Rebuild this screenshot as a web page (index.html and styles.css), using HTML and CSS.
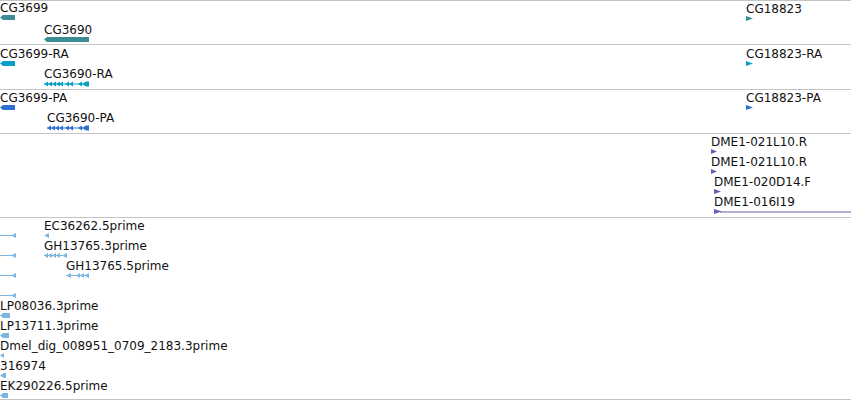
FILE: index.html
```html
<!DOCTYPE html>
<html>
<head>
<meta charset="utf-8">
<link rel="stylesheet" href="styles.css">
</head>
<body>
<div class="view">
  <section class="track gene teal">
    <div class="feat" style="left:0;top:1px"><span class="lbl">CG3699</span>
      <svg width="15" height="5"><polygon points="0,2.5 3,0 15,0 15,5 3,5"/></svg></div>
    <div class="feat" style="left:44px;top:23px"><span class="lbl">CG3690</span>
      <svg width="45" height="5"><polygon points="0,2.5 3,0 45,0 45,5 3,5"/></svg></div>
    <div class="feat" style="left:746px;top:2px"><span class="lbl">CG18823</span>
      <svg width="7" height="5"><polygon points="0,0 7,2.5 0,5"/></svg></div>
  </section>
  <section class="track gene cyan">
    <div class="feat" style="left:0;top:3px"><span class="lbl">CG3699-RA</span>
      <svg width="15" height="5"><polygon points="0,2.5 3,0 15,0 15,5 3,5"/></svg></div>
    <div class="feat" style="left:44px;top:23px"><span class="lbl">CG3690-RA</span>
      <svg width="45" height="6"><rect x="0" y="2.5" width="45" height="1"/><polygon points="0,3 4,0.5 4,5.5"/><polygon points="4,3 8,0.5 8,5.5"/><polygon points="8,3 12,0.5 12,5.5"/><polygon points="12,3 16,0.5 16,5.5"/><polygon points="15,3 19,0.5 19,5.5"/><polygon points="21,3 25,0.5 25,5.5"/><polygon points="25,3 29,0.5 29,5.5"/><polygon points="34,3 38,0.5 38,5.5"/><polygon points="38,3 42,0.5 45,0.5 45,5.5 42,5.5"/></svg></div>
    <div class="feat" style="left:746px;top:3px"><span class="lbl">CG18823-RA</span>
      <svg width="7" height="5"><polygon points="0,0 7,2.5 0,5"/></svg></div>
  </section>
  <section class="track gene blue">
    <div class="feat" style="left:0;top:2px"><span class="lbl">CG3699-PA</span>
      <svg width="15" height="5"><polygon points="0,2.5 3,0 15,0 15,5 3,5"/></svg></div>
    <div class="feat" style="left:47px;top:22px"><span class="lbl">CG3690-PA</span>
      <svg width="42" height="6"><rect x="0" y="2.5" width="42" height="1"/><polygon points="0,3 4,0.5 4,5.5"/><polygon points="4,3 8,0.5 8,5.5"/><polygon points="8,3 12,0.5 12,5.5"/><polygon points="12,3 16,0.5 16,5.5"/><polygon points="18,3 22,0.5 22,5.5"/><polygon points="22,3 26,0.5 26,5.5"/><polygon points="31,3 35,0.5 35,5.5"/><polygon points="35,3 39,0.5 42,0.5 42,5.5 39,5.5"/></svg></div>
    <div class="feat" style="left:746px;top:2px"><span class="lbl">CG18823-PA</span>
      <svg width="7" height="5"><polygon points="0,0 7,2.5 0,5"/></svg></div>
  </section>
  <section class="track clones purple">
    <div class="feat" style="left:711px;top:2px"><span class="lbl">DME1-021L10.R</span>
      <svg width="6" height="5"><polygon points="0,0 6,2.5 0,5"/></svg></div>
    <div class="feat" style="left:711px;top:22px"><span class="lbl">DME1-021L10.R</span>
      <svg width="6" height="5"><polygon points="0,0 6,2.5 0,5"/></svg></div>
    <div class="feat" style="left:714px;top:42px"><span class="lbl clip">DME1-020D14.F</span>
      <svg width="7" height="5"><polygon points="0,0 7,2.5 0,5"/></svg></div>
    <div class="feat" style="left:714px;top:62px"><span class="lbl">DME1-016I19</span>
      <svg width="137" height="5"><polygon points="0,0 8,2.5 0,5"/><rect x="6" y="2.5" width="131" height="1"/></svg></div>
  </section>
  <section class="track ests light">
    <div class="feat" style="left:0;top:2px"><span class="lbl"></span>
      <svg width="16" height="5"><rect x="0" y="2" width="13" height="1"/><polygon points="11,2.5 16,0 16,5"/></svg></div>
    <div class="feat" style="left:0;top:22px"><span class="lbl"></span>
      <svg width="16" height="5"><rect x="0" y="2" width="13" height="1"/><polygon points="11,2.5 16,0 16,5"/></svg></div>
    <div class="feat" style="left:0;top:42px"><span class="lbl"></span>
      <svg width="16" height="5"><rect x="0" y="2" width="13" height="1"/><polygon points="11,2.5 16,0 16,5"/></svg></div>
    <div class="feat" style="left:0;top:62px"><span class="lbl"></span>
      <svg width="16" height="5"><rect x="0" y="2" width="13" height="1"/><polygon points="11,2.5 16,0 16,5"/></svg></div>
    <div class="feat" style="left:44px;top:2px"><span class="lbl">EC36262.5prime</span>
      <svg width="5" height="5"><polygon points="0,2.5 5,0 5,5"/></svg></div>
    <div class="feat" style="left:44px;top:22px"><span class="lbl">GH13765.3prime</span>
      <svg width="23" height="5"><rect x="0" y="2" width="23" height="1"/><polygon points="0,2.5 4,0 4,5"/><polygon points="4,2.5 8,0 8,5"/><polygon points="8,2.5 12,0 12,5"/><polygon points="12,2.5 16,0 16,5"/><polygon points="18,2.5 23,0 23,5"/></svg></div>
    <div class="feat" style="left:66px;top:42px"><span class="lbl">GH13765.5prime</span>
      <svg width="23" height="5"><rect x="0" y="2" width="23" height="1"/><polygon points="0,2.5 5,0 5,5"/><polygon points="10,2.5 14,0 14,5"/><polygon points="14,2.5 18,0 18,5"/><polygon points="18,2.5 23,0 23,5"/></svg></div>
    <div class="feat" style="left:0;top:82px"><span class="lbl">LP08036.3prime</span>
      <svg width="10" height="5"><polygon points="0,2.5 3,0 10,0 10,5 3,5"/></svg></div>
    <div class="feat" style="left:0;top:102px"><span class="lbl">LP13711.3prime</span>
      <svg width="9" height="5"><polygon points="0,2.5 3,0 9,0 9,5 3,5"/></svg></div>
    <div class="feat" style="left:0;top:122px"><span class="lbl">Dmel_dig_008951_0709_2183.3prime</span>
      <svg width="4" height="5"><polygon points="0,2.5 4,0 4,5"/></svg></div>
    <div class="feat" style="left:0;top:142px"><span class="lbl">316974</span>
      <svg width="6" height="5"><polygon points="0,2.5 4,0 6,0 6,5 4,5"/></svg></div>
    <div class="feat" style="left:0;top:162px"><span class="lbl">EK290226.5prime</span>
      <svg width="8" height="5"><polygon points="0,2.5 3,0 8,0 8,5 3,5"/></svg></div>
  </section>
</div>
</body>
</html>
```
FILE: styles.css
```css
html, body {
  margin: 0;
  padding: 0;
  background: #fff;
}
.view {
  width: 851px;
  border-top: 1px solid #c4c4c4;
  display: flex;
  flex-direction: column;
}
.track {
  position: relative;
  overflow: hidden;
  border-bottom: 1px solid #c4c4c4;
}
.gene { height: 43px; }
.cyan { height: 44px; }
.clones { height: 83px; }
.ests { height: 181px; }
.feat {
  position: absolute;
  display: flex;
  flex-direction: column;
  align-items: flex-start;
}
.lbl {
  display: block;
  height: 13px;
  font: 12px/13px "DejaVu Sans", sans-serif;
  color: #111;
  white-space: nowrap;
}
.clip {
  max-width: 96px;
  overflow: hidden;
}
.feat svg { display: block; }
.teal svg { fill: #3a8d95; }
.cyan svg { fill: #0a9fc6; }
.blue svg { fill: #2f6fd2; }
.purple svg { fill: #6f58b0; }
.light svg { fill: #7db6de; }
```
